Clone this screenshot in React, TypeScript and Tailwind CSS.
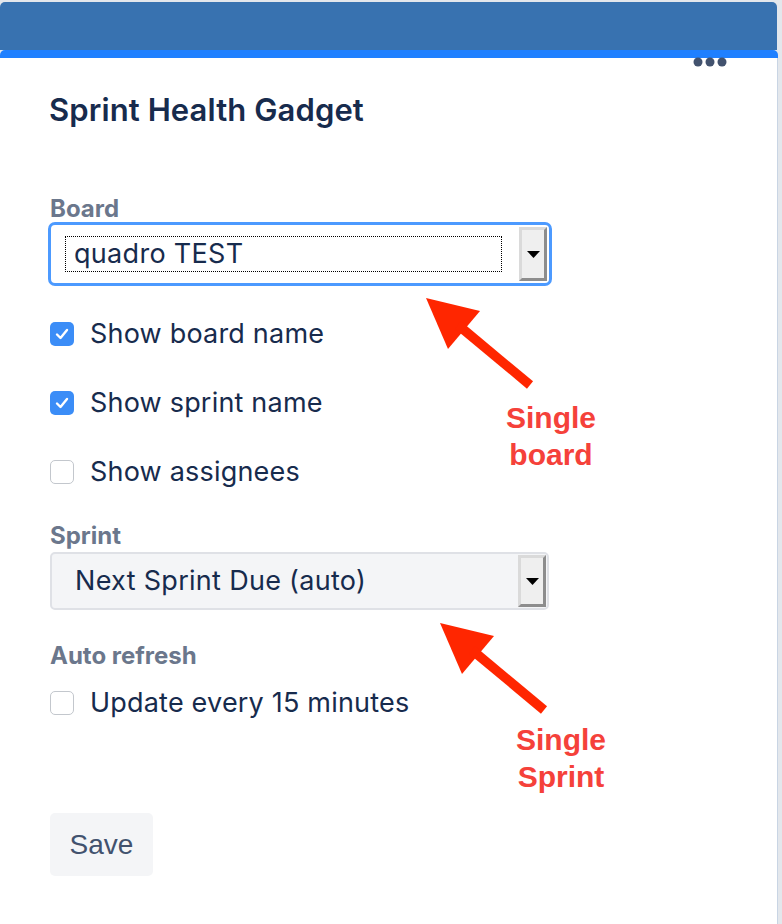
import React from 'react';

function Checkbox({ checked }: { checked: boolean }) {
    if (checked) {
        return (
            <span className="w-[24px] h-[24px] rounded-[5px] bg-[#3b8df7] flex items-center justify-center shrink-0">
                <svg width="14" height="12" viewBox="0 0 14 12" fill="none">
                    <path d="M2 6.5 L5.5 10 L12 2" stroke="#fff" strokeWidth="2.4" strokeLinecap="round" strokeLinejoin="round" />
                </svg>
            </span>
        );
    }
    return <span className="w-[24px] h-[24px] rounded-[5px] bg-white border-[1.5px] border-[#c3c7cd] shrink-0" />;
}

function CheckRow({ checked, label, className = '' }: { checked: boolean; label: string; className?: string }) {
    return (
        <div className={`h-[40px] flex items-center gap-[16px] ${className}`}>
            <Checkbox checked={checked} />
            <span className="text-[27px] text-[#172b4d] tracking-[0.2px]">{label}</span>
        </div>
    );
}

function DropButton({ className = '' }: { className?: string }) {
    return (
        <div
            className={`w-[28px] bg-[#efefef] border-[3px] border-l-[#dadada] border-t-[#dadada] border-r-[#8d8d8d] border-b-[#8d8d8d] flex items-center justify-center ${className}`}
        >
            <svg width="13" height="7" viewBox="0 0 13 7">
                <path d="M0 0 H13 L6.5 7 Z" fill="#000" />
            </svg>
        </div>
    );
}

function FieldLabel({ text, className = '' }: { text: string; className?: string }) {
    return (
        <div className={`h-[24px] flex items-center text-[24px] font-bold text-[#6b778c] ${className}`}>
            {text}
        </div>
    );
}

function Arrow({ dx = 0, dy = 0 }: { dx?: number; dy?: number }) {
    return (
        <g transform={`translate(${dx} ${dy})`}>
            <polygon points="426,298 480,311 448,349" fill="#ff2600" />
            <line x1="458" y1="325" x2="530" y2="385" stroke="#ff2600" strokeWidth="9.5" />
        </g>
    );
}

export default function App() {
    return (
        <div className="relative w-[782px] h-[924px] bg-[#e3e7ec] overflow-hidden font-['Inter','Noto_Sans',sans-serif]">
            <div className="mt-[2px] w-[777px] h-[48px] bg-[#3872b0] rounded-t-[5px]" />
            <div className="w-[778px] h-[8px] bg-[#1f80ff] rounded-t-[5px]" />
            <div className="relative w-[778px] h-[866px] bg-white border-r border-[#c9d5e4] pl-[50px] pt-[34px]">
                <svg className="absolute left-[689px] top-[-1px]" width="42" height="10" viewBox="0 0 42 10">
                    <circle cx="9" cy="5" r="4.5" fill="#42526e" />
                    <circle cx="21" cy="5" r="4.5" fill="#42526e" />
                    <circle cx="33" cy="5" r="4.5" fill="#42526e" />
                </svg>

                <h1 className="h-[36px] flex items-center -ml-[1px] text-[31px] font-semibold text-[#172b4d] tracking-[0.1px]">
                    Sprint Health Gadget
                </h1>

                <FieldLabel text="Board" className="mt-[69px]" />
                <div className="mt-[1px] -ml-[2px] w-[504px] h-[64px] rounded-[7px] border-[3px] border-[#4c9aff] bg-white flex items-stretch p-[1px] pl-[14px]">
                    <div className="flex-1 flex items-center">
                        <div className="w-[437px] h-[36px] border border-dotted border-black flex items-center pl-[8px] text-[27px] tracking-[0.3px] text-[#172b4d]">
                            quadro TEST
                        </div>
                    </div>
                    <DropButton className="my-[1px] mr-[1px]" />
                </div>

                <CheckRow checked label="Show board name" className="mt-[28px]" />
                <CheckRow checked label="Show sprint name" className="mt-[29px]" />
                <CheckRow checked={false} label="Show assignees" className="mt-[29px]" />

                <FieldLabel text="Sprint" className="mt-[32px]" />
                <div className="mt-[4px] w-[499px] h-[58px] rounded-[5px] border-2 border-[#dfe1e6] bg-[#f4f5f7] flex items-stretch pl-[23px] pr-[1px] py-[1px]">
                    <div className="flex-1 flex items-center text-[27px] tracking-[0.3px] text-[#172b4d]">Next Sprint Due (auto)</div>
                    <DropButton />
                </div>

                <FieldLabel text="Auto refresh" className="mt-[34px]" />
                <CheckRow checked={false} label="Update every 15 minutes" className="mt-[15px]" />

                <button className="mt-[90px] w-[103px] h-[63px] rounded-[5px] bg-[#f4f5f7] text-[28px] text-[#42526e] font-['Liberation_Sans','Arial',sans-serif]">
                    Save
                </button>
            </div>

            <svg className="absolute left-0 top-0 pointer-events-none" width="782" height="924" viewBox="0 0 782 924">
                <Arrow />
                <Arrow dx={14} dy={325} />
            </svg>
            <div className="absolute left-[491px] top-[399px] w-[120px] text-center text-[30px] leading-[37px] font-bold text-[#f5413a] font-['Liberation_Sans','Arial',sans-serif]">
                Single<br />board
            </div>
            <div className="absolute left-[501px] top-[721px] w-[120px] text-center text-[30px] leading-[37px] font-bold text-[#f5413a] font-['Liberation_Sans','Arial',sans-serif]">
                Single<br />Sprint
            </div>
        </div>
    );
}
